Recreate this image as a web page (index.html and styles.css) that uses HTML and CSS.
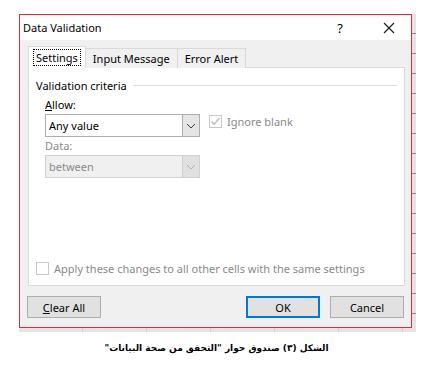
FILE: index.html
```html
<!DOCTYPE html>
<html>

<head>
    <title>Data Validation</title>
    <meta charset="UTF-8">
    <link rel="stylesheet" href="styles.css">
</head>

<body>
    <div class="sheet">
        <div class="dialog">
            <div class="titlebar">
                <span class="title">Data Validation</span>
                <span class="help">?</span>
                <span class="close">
                    <svg width="12" height="12" viewBox="0 0 12 12">
                        <path d="M1 1 L11 11 M11 1 L1 11" stroke="#1a1a1a" stroke-width="1.1" fill="none"/>
                    </svg>
                </span>
            </div>

            <div class="body">
                <div class="tabs">
                    <div class="tab active"><span class="focus">Settings</span></div>
                    <div class="tab">Input Message</div>
                    <div class="tab">Error Alert</div>
                </div>

                <div class="panel">
                    <div class="group-head">Validation criteria</div>

                    <div class="criteria">
                        <div class="fields">
                            <label class="field-label"><u>A</u>llow:</label>
                            <div class="combo">
                                <span class="combo-text">Any value</span>
                                <span class="combo-btn">
                                    <svg width="10" height="6" viewBox="0 0 10 6">
                                        <path d="M1 1 L5 5 L9 1" stroke="#404040" stroke-width="1" fill="none"/>
                                    </svg>
                                </span>
                            </div>
                            <label class="field-label disabled">Data:</label>
                            <div class="combo disabled">
                                <span class="combo-text">between</span>
                                <span class="combo-btn">
                                    <svg width="10" height="6" viewBox="0 0 10 6">
                                        <path d="M1 1 L5 5 L9 1" stroke="#b0b0b0" stroke-width="1" fill="none"/>
                                    </svg>
                                </span>
                            </div>
                        </div>

                        <div class="check disabled ignore">
                            <span class="box">
                                <svg width="11" height="11" viewBox="0 0 11 11">
                                    <path d="M1.5 5.5 L4.2 8.3 L9.5 1.8" stroke="#b5b5b5" stroke-width="1.3" fill="none"/>
                                </svg>
                            </span>
                            <span>Ignore blank</span>
                        </div>
                    </div>

                    <div class="check disabled apply">
                        <span class="box"></span>
                        <span>Apply these changes to all other cells with the same settings</span>
                    </div>
                </div>

                <div class="buttons">
                    <button class="btn"><u>C</u>lear All</button>
                    <div class="btn-right">
                        <button class="btn default">OK</button>
                        <button class="btn">Cancel</button>
                    </div>
                </div>
            </div>
        </div>
    </div>

    <p class="caption" dir="rtl">الشكل (٣) صندوق حوار "التحقق من صحة البيانات"</p>
</body>

</html>
```

FILE: styles.css
```css
* {
    margin: 0;
    padding: 0;
    box-sizing: border-box;
}

body {
    font-family: "Noto Sans", "Open Sans", Arial, sans-serif;
    font-size: 11px;
    color: #000;
    background: #fff;
    width: 433px;
    height: 367px;
    padding: 14px 0 0 19px;
}

/* spreadsheet peeking out behind the dialog */
.sheet {
    width: 397px;
    padding: 0 4px 4px 0;
    background:
        repeating-linear-gradient(to bottom, transparent 0, transparent 19px, #8a8a8a 19px, #8a8a8a 20px) right top / 4px 100% no-repeat,
        repeating-linear-gradient(to right, transparent 0, transparent 63px, #cfcfcf 63px, #cfcfcf 64px) left bottom / 100% 4px no-repeat,
        #e4e4e4;
}

.dialog {
    width: 393px;
    height: 314px;
    border: 1px solid #e5283a;
    background: #f0f0f0;
    display: flex;
    flex-direction: column;
}

.titlebar {
    height: 25px;
    background: #fff;
    display: flex;
    align-items: center;
    padding-left: 3px;
}

.title {
    flex: 1;
    font-size: 11px;
}

.help {
    width: 14px;
    text-align: center;
    font-size: 13px;
    margin-right: 36px;
}

.close {
    width: 12px;
    height: 12px;
    display: flex;
    margin-right: 16px;
}

.body {
    flex: 1;
    padding: 7px 7px 0 7px;
    display: flex;
    flex-direction: column;
}

.tabs {
    display: flex;
    align-items: flex-end;
    height: 21px;
    padding-left: 1px;
    position: relative;
    z-index: 1;
    margin-bottom: -1px;
}

.tab {
    height: 20px;
    padding: 0 7px;
    border: 1px solid #d9d9d9;
    border-bottom: none;
    background: #f0f0f0;
    display: flex;
    align-items: center;
    color: #000;
    margin-left: -1px;
}

.tab.active {
    height: 22px;
    background: #fff;
    padding: 0 4px;
    margin-left: 0;
}

.focus {
    border: 1px dotted #000;
    padding: 0 2px;
    line-height: 15px;
}

.panel {
    width: 377px;
    height: 219px;
    margin-left: 1px;
    background: #fff;
    border: 1px solid #d9d9d9;
    padding: 9px 7px 9px 7px;
    display: flex;
    flex-direction: column;
}

.group-head {
    display: flex;
    align-items: center;
    gap: 6px;
    height: 16px;
}

.group-head::after {
    content: "";
    flex: 1;
    height: 1px;
    background: #dcdcdc;
}

.criteria {
    display: flex;
    padding-left: 9px;
    margin-top: 4px;
    flex: 1;
    gap: 9px;
}

.fields {
    width: 155px;
    display: flex;
    flex-direction: column;
}

.field-label {
    display: block;
    height: 16px;
    line-height: 16px;
}

.field-label.disabled {
    color: #8a8a8a;
    margin-top: 1px;
}

.combo {
    height: 23px;
    border: 1px solid #adadad;
    background: #fff;
    display: flex;
    margin-top: 1px;
}

.combo-text {
    flex: 1;
    padding-left: 3px;
    line-height: 21px;
}

.combo-btn {
    width: 17px;
    background: #e5e5e5;
    border-left: 1px solid #adadad;
    display: flex;
    align-items: center;
    justify-content: center;
}

.combo.disabled {
    background: #f0f0f0;
    border-color: #d0d0d0;
}

.combo.disabled .combo-text {
    color: #8a8a8a;
}

.combo.disabled .combo-btn {
    background: #e0e0e0;
    border-left-color: #d0d0d0;
}

.check {
    display: flex;
    align-items: center;
    gap: 5px;
    height: 16px;
}

.check.disabled {
    color: #8a8a8a;
}

.ignore {
    margin-top: 16px;
}

.box {
    width: 13px;
    height: 13px;
    border: 1px solid #c8c8c8;
    background: #fff;
    display: flex;
    align-items: center;
    justify-content: center;
}

.buttons {
    display: flex;
    justify-content: space-between;
    margin-top: 10px;
}

.btn-right {
    display: flex;
    gap: 10px;
}

.btn {
    width: 74px;
    height: 22px;
    font-family: inherit;
    font-size: 11px;
    color: #000;
    background: #e1e1e1;
    border: 1px solid #adadad;
}

.btn.default {
    border: 2px solid #0078d7;
}

.caption {
    margin: 11px 0 0 -19px;
    width: 433px;
    text-align: center;
    font-family: "DejaVu Sans", sans-serif;
    font-weight: bold;
    font-size: 9px;
}
```
